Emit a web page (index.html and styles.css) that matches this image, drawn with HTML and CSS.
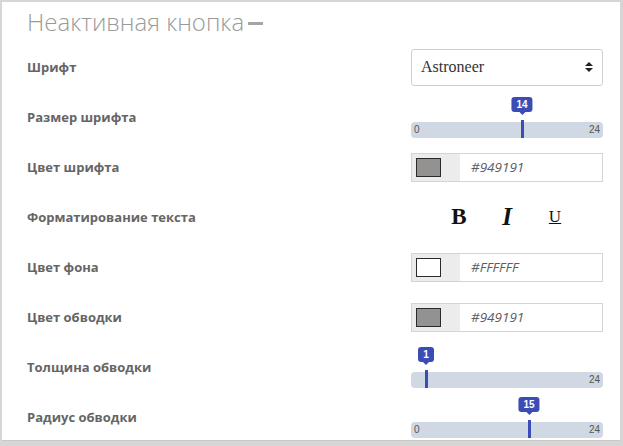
FILE: index.html
```html
<!DOCTYPE html>
<html lang="ru">
<head>
<meta charset="utf-8">
<link rel="stylesheet" href="styles.css">
</head>
<body>
<div class="panel">
  <div class="title-row">
    <h1 class="title">Неактивная кнопка</h1>
    <span class="dash"></span>
  </div>

  <div class="row">
    <div class="label">Шрифт</div>
    <div class="control">
      <div class="select">
        <span class="select-text">Astroneer</span>
        <svg class="select-arrows" width="8" height="12" viewBox="0 0 8 12"><path d="M0 5 L4 1 L8 5 Z M0 7 L8 7 L4 11 Z" fill="#222"/></svg>
      </div>
    </div>
  </div>

  <div class="row">
    <div class="label">Размер шрифта</div>
    <div class="control">
      <div class="slider">
        <div class="track"><span>0</span><span>24</span></div>
        <div class="thumb" style="left:111px"><span class="badge">14</span><span class="line"></span></div>
      </div>
    </div>
  </div>

  <div class="row">
    <div class="label">Цвет шрифта</div>
    <div class="control">
      <div class="color-input">
        <div class="swatch-box"><span class="swatch swatch-gray"></span></div>
        <span class="color-text">#949191</span>
      </div>
    </div>
  </div>

  <div class="row">
    <div class="label">Форматирование текста</div>
    <div class="control">
      <div class="format">
        <span class="fmt fmt-b">B</span>
        <span class="fmt fmt-i">I</span>
        <span class="fmt fmt-u">U</span>
      </div>
    </div>
  </div>

  <div class="row">
    <div class="label">Цвет фона</div>
    <div class="control">
      <div class="color-input">
        <div class="swatch-box"><span class="swatch swatch-white"></span></div>
        <span class="color-text">#FFFFFF</span>
      </div>
    </div>
  </div>

  <div class="row">
    <div class="label">Цвет обводки</div>
    <div class="control">
      <div class="color-input">
        <div class="swatch-box"><span class="swatch swatch-gray"></span></div>
        <span class="color-text">#949191</span>
      </div>
    </div>
  </div>

  <div class="row">
    <div class="label">Толщина обводки</div>
    <div class="control">
      <div class="slider">
        <div class="track"><span></span><span>24</span></div>
        <div class="thumb" style="left:15px"><span class="badge">1</span><span class="line"></span></div>
      </div>
    </div>
  </div>

  <div class="row">
    <div class="label">Радиус обводки</div>
    <div class="control">
      <div class="slider">
        <div class="track"><span>0</span><span>24</span></div>
        <div class="thumb" style="left:118px"><span class="badge">15</span><span class="line"></span></div>
      </div>
    </div>
  </div>
</div>
</body>
</html>
```

FILE: styles.css
```css
html, body {
  margin: 0;
  padding: 0;
}
body {
  background: #d6d6d6;
  width: 623px;
  height: 446px;
  overflow: hidden;
  font-family: "Open Sans", "Liberation Sans", sans-serif;
}
.panel {
  margin: 2px 3px 0 2px;
  height: 439px;
  background: #fff;
  border-bottom: 1px solid #c8c8c8;
  box-sizing: border-box;
  padding: 0 17px 0 25px;
  overflow: hidden;
}
.title-row {
  display: flex;
  align-items: center;
  height: 40px;
}
.title {
  margin: 0;
  font-family: "Open Sans", sans-serif;
  font-weight: 300;
  font-size: 24px;
  line-height: 36px;
  color: #9a9a9a;
}
.dash {
  width: 15px;
  height: 3px;
  background: #a5a5a5;
  margin-left: 4px;
  margin-top: 2px;
}
.row {
  display: flex;
  align-items: center;
  justify-content: space-between;
  height: 50px;
}
.label {
  font-weight: 700;
  font-size: 13px;
  color: #656565;
}
.control {
  width: 192px;
}
.select {
  height: 37px;
  box-sizing: border-box;
  border: 1px solid #cfcfcf;
  border-radius: 3px;
  display: flex;
  align-items: center;
  justify-content: space-between;
  padding: 0 9px 0 9px;
}
.select-text {
  font-family: "Liberation Serif", serif;
  font-size: 16px;
  color: #333;
}
.slider {
  position: relative;
  height: 41px;
}
.track {
  position: absolute;
  left: 0;
  right: 0;
  bottom: 0;
  height: 16px;
  background: #cfd8e3;
  border-radius: 4px;
  display: flex;
  justify-content: space-between;
  align-items: center;
  padding: 0 3px;
  font-family: "Liberation Sans", sans-serif;
  font-size: 10px;
  color: #555;
}
.thumb {
  position: absolute;
  top: 0;
  bottom: 0;
  width: 0;
}
.line {
  position: absolute;
  left: -1px;
  width: 3px;
  top: 23px;
  bottom: 0;
  background: #3b4db5;
}
.badge {
  position: absolute;
  top: 0;
  left: 0;
  transform: translateX(-50%);
  height: 15px;
  min-width: 16px;
  box-sizing: border-box;
  padding: 0 5px;
  background: #3b4db5;
  border-radius: 3px;
  color: #fff;
  font-family: "Liberation Sans", sans-serif;
  font-weight: 700;
  font-size: 10px;
  line-height: 15px;
  text-align: center;
}
.badge::after {
  content: "";
  position: absolute;
  left: 50%;
  margin-left: -3px;
  bottom: -3px;
  border-left: 3px solid transparent;
  border-right: 3px solid transparent;
  border-top: 3px solid #3b4db5;
}
.color-input {
  height: 29px;
  box-sizing: border-box;
  border: 1px solid #d4d4d4;
  display: flex;
  align-items: center;
}
.swatch-box {
  width: 48px;
  height: 100%;
  background: #ececec;
  display: flex;
  align-items: center;
  padding-left: 4px;
  box-sizing: border-box;
}
.swatch {
  width: 25px;
  height: 19px;
  box-sizing: border-box;
  border: 1px solid #2a2a2a;
}
.swatch-gray {
  background: #949191;
}
.swatch-white {
  background: #fff;
}
.color-text {
  margin-left: 11px;
  font-style: italic;
  font-size: 13.5px;
  color: #5d5d5d;
}
.format {
  display: flex;
  justify-content: center;
  align-items: center;
  height: 30px;
}
.fmt {
  width: 48px;
  text-align: center;
  font-family: "Liberation Serif", serif;
  color: #111;
}
.fmt-b {
  font-weight: 700;
  font-size: 23px;
}
.fmt-i {
  font-style: italic;
  font-weight: 700;
  font-size: 25px;
}
.fmt-u {
  font-size: 17px;
  text-decoration: underline;
}
```
